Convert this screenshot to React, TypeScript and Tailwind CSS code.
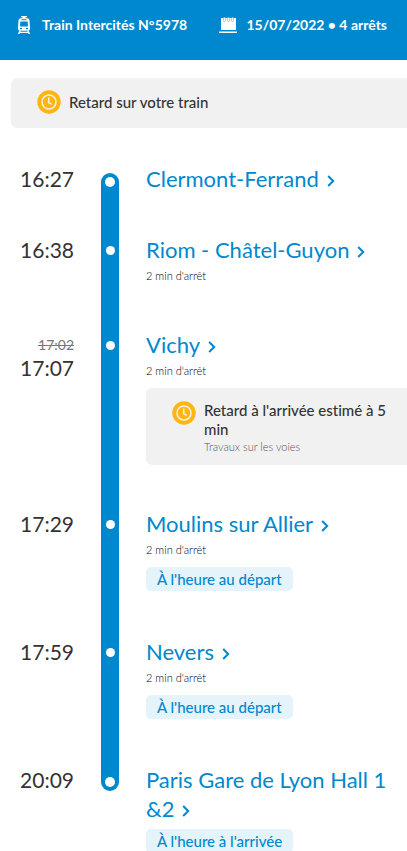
import React from "react";

type Stop = {
  time: string;
  previousTime?: string;
  name: string;
  halt?: string;
  alert?: { title: string; reason: string };
  status?: string;
};

const stops: Stop[] = [
  { time: "16:27", name: "Clermont-Ferrand" },
  { time: "16:38", name: "Riom - Châtel-Guyon", halt: "2 min d'arrêt" },
  {
    time: "17:07",
    previousTime: "17:02",
    name: "Vichy",
    halt: "2 min d'arrêt",
    alert: { title: "Retard à l'arrivée estimé à 5 min", reason: "Travaux sur les voies" },
  },
  { time: "17:29", name: "Moulins sur Allier", halt: "2 min d'arrêt", status: "À l'heure au départ" },
  { time: "17:59", name: "Nevers", halt: "2 min d'arrêt", status: "À l'heure au départ" },
  { time: "20:09", name: "Paris Gare de Lyon Hall 1 &2", status: "À l'heure à l'arrivée" },
];

function TrainIcon() {
  return (
    <svg viewBox="0 0 14 19" className="h-[19px] w-[14px] shrink-0" fill="#fff" aria-hidden="true">
      <path d="M4 0h6v1.200H8.200L9 2.500H5l.8-1.300H4z" />
      <path
        fillRule="evenodd"
        d="M3.500 2.300h7Q12.300 2.300 12.500 4.500L13 12q0 2.800-2 2.800H3Q1 14.800 1 12l.5-7.500Q1.700 2.300 3.500 2.300zM4.500 3.300v1h5v-1zM3.300 5.500L3 10.500h8l-.3-5zM3 12v1.200h2V12zM9 12v1.200h2V12z"
      />
      <path d="M2.300 14.800h1.500l-.5 1h7.400l-.5-1h1.500L13.200 18h-1.700l-.5-1H3l-.5 1H.8z" />
    </svg>
  );
}

function CalendarIcon() {
  return (
    <svg viewBox="0 0 18 17" className="h-[17px] w-[18px] shrink-0" aria-hidden="true">
      <path d="M2 1h15v12H2z" fill="#fff" />
      <path d="M0 14.500h18V16H0z" fill="#fff" />
      <g fill="#fff" stroke="#7fc3e8" strokeWidth="0.800">
        <rect x="4.500" y="0.500" width="2" height="4" rx="1" />
        <rect x="8.500" y="0.500" width="2" height="4" rx="1" />
        <rect x="12.500" y="0.500" width="2" height="4" rx="1" />
      </g>
    </svg>
  );
}

function ClockIcon() {
  return (
    <svg viewBox="0 0 24 24" className="h-6 w-6 shrink-0" fill="none" aria-hidden="true">
      <circle cx="12" cy="12" r="11.700" fill="#ffb612" />
      <circle cx="12" cy="12" r="7" stroke="#f4f0e8" strokeWidth="1.500" />
      <path d="M11.700 7.500v5l3 1.800" stroke="#f4f0e8" strokeWidth="1.500" />
    </svg>
  );
}

function Chevron() {
  return (
    <svg viewBox="0 0 8 12" className="ml-2 inline-block h-3 w-2 align-baseline" fill="none" aria-hidden="true">
      <path d="M1.200 1l5 5-5 5" stroke="#0088ce" strokeWidth="2" />
    </svg>
  );
}

function StopRow({ stop, first, last }: { stop: Stop; first: boolean; last: boolean }) {
  const rail = first
    ? "mt-[9px] rounded-t-full pt-1"
    : last
      ? "h-[26px] rounded-b-full pt-3"
      : "pt-[11px]";
  const spacing = first ? "pb-10" : last ? "pb-0" : stop.status ? "pb-[46px]" : "pb-[44px]";
  return (
    <li className="flex">
      <div className="flex w-[74px] shrink-0 flex-col items-end text-[21px] leading-[29px] text-[#333]">
        {stop.previousTime && (
          <s className="mt-[5px] text-sm leading-5 text-[#777]">{stop.previousTime}</s>
        )}
        <time className={stop.previousTime ? "leading-[26px]" : ""}>{stop.time}</time>
      </div>
      <div className={`mx-[27px] flex w-[18px] shrink-0 justify-center bg-[#0088ce] ${rail}`}>
        <span className={`rounded-full bg-white ${first || last ? "h-[10px] w-[10px]" : "h-[9px] w-[9px]"}`} />
      </div>
      <div className={`min-w-0 flex-1 ${spacing}`}>
        <h2 className="pr-3 pb-[2px] text-[22px] leading-[29px] text-[#0088ce]">
          <a href="#">
            {stop.name}
            <Chevron />
          </a>
        </h2>
        {stop.halt && <p className="text-[11px] leading-5 font-light text-black">{stop.halt}</p>}
        {stop.alert && (
          <div className="mt-[7px] flex gap-2 rounded-l-md bg-[#f1f1f1] pt-[13px] pr-3 pb-[11px] pl-[26px]">
            <ClockIcon />
            <div>
              <p className="text-[15px] leading-[19px] font-medium text-[#333]">{stop.alert.title}</p>
              <p className="text-[11px] leading-[15px] font-light text-[#555]">{stop.alert.reason}</p>
            </div>
          </div>
        )}
        {stop.status && (
          <p className={`${last ? "mt-1" : "mt-[7px]"} w-fit rounded-[5px] bg-[#e5f3fb] px-[11px] text-[15px] leading-6 font-medium text-[#0088ce]`}>
            {stop.status}
          </p>
        )}
      </div>
    </li>
  );
}

export default function App() {
  return (
    <main className="bg-white font-['Lato',sans-serif] [font-variant-ligatures:none]">
      <header className="flex h-[60px] items-start bg-[#0088ce] pt-[13px] pr-5 pl-[17px] text-sm leading-6 font-bold whitespace-nowrap text-white">
        <div className="flex flex-1 items-center gap-[11px]">
          <TrainIcon />
          <h1>Train Intercités N°5978</h1>
        </div>
        <div className="flex items-center gap-[9px]">
          <CalendarIcon />
          <p>15/07/2022 • 4 arrêts</p>
        </div>
      </header>
      <div className="mt-[18px] ml-[11px] flex h-[50px] items-center gap-2 rounded-l-md bg-[#f1f1f1] pb-[2px] pl-[26px] text-[15px] font-medium text-[#333]">
        <ClockIcon />
        <p>Retard sur votre train</p>
      </div>
      <ol className="mt-9">
        {stops.map((stop, i) => (
          <StopRow key={stop.time} stop={stop} first={i === 0} last={i === stops.length - 1} />
        ))}
      </ol>
    </main>
  );
}
